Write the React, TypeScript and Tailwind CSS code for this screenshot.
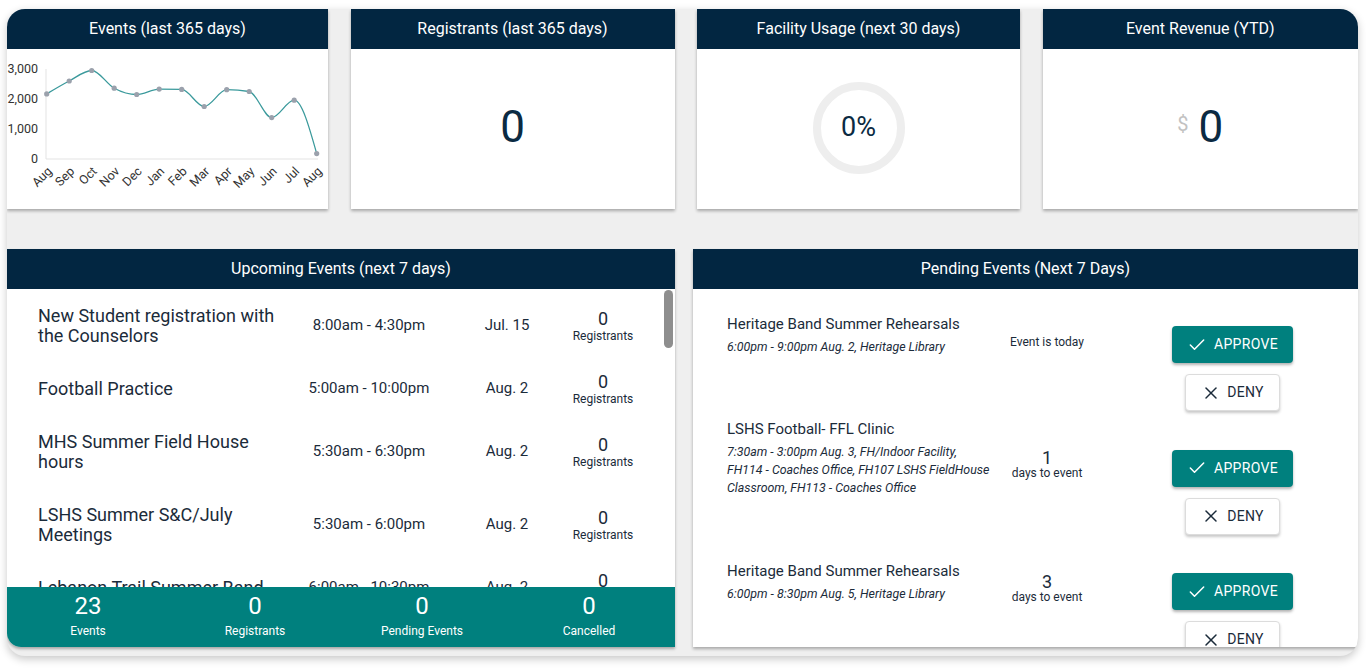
import { Check, X } from "lucide-react";

const navy = "bg-[#022641]";

const months = ["Aug", "Sep", "Oct", "Nov", "Dec", "Jan", "Feb", "Mar", "Apr", "May", "Jun", "Jul", "Aug"];
const values = [2170, 2600, 2950, 2360, 2150, 2330, 2320, 1750, 2310, 2250, 1380, 1960, 180];

const upcoming = [
  { name: "New Student registration with the Counselors", time: "8:00am - 4:30pm", date: "Jul. 15", regs: 0, tall: true },
  { name: "Football Practice", time: "5:00am - 10:00pm", date: "Aug. 2", regs: 0, tall: false },
  { name: "MHS Summer Field House hours", time: "5:30am - 6:30pm", date: "Aug. 2", regs: 0, tall: true },
  { name: "LSHS Summer S&C/July Meetings", time: "5:30am - 6:00pm", date: "Aug. 2", regs: 0, tall: true },
  { name: "Lebanon Trail Summer Band", time: "6:00am - 10:30pm", date: "Aug. 2", regs: 0, tall: false },
];

const pending = [
  { title: "Heritage Band Summer Rehearsals", sub: "6:00pm - 9:00pm Aug. 2, Heritage Library", days: null },
  {
    title: "LSHS Football- FFL Clinic",
    sub: "7:30am - 3:00pm Aug. 3, FH/Indoor Facility, FH114 - Coaches Office, FH107 LSHS FieldHouse Classroom, FH113 - Coaches Office",
    days: 1,
  },
  { title: "Heritage Band Summer Rehearsals", sub: "6:00pm - 8:30pm Aug. 5, Heritage Library", days: 3 },
];

const stats = [
  { n: 23, label: "Events" },
  { n: 0, label: "Registrants" },
  { n: 0, label: "Pending Events" },
  { n: 0, label: "Cancelled" },
];

// monotone-x curve, same idea as d3's curveMonotoneX
function monotonePath(pts: [number, number][]) {
  const n = pts.length;
  const t: number[] = new Array(n).fill(0);
  const sign = (v: number) => (v < 0 ? -1 : v > 0 ? 1 : 0);
  for (let i = 1; i < n - 1; i++) {
    const h0 = pts[i][0] - pts[i - 1][0];
    const h1 = pts[i + 1][0] - pts[i][0];
    const s0 = (pts[i][1] - pts[i - 1][1]) / h0;
    const s1 = (pts[i + 1][1] - pts[i][1]) / h1;
    const p = (s0 * h1 + s1 * h0) / (h0 + h1);
    t[i] = (sign(s0) + sign(s1)) * Math.min(Math.abs(s0), Math.abs(s1), 0.5 * Math.abs(p)) || 0;
  }
  const hA = pts[1][0] - pts[0][0];
  t[0] = (3 * (pts[1][1] - pts[0][1]) / hA - t[1]) / 2;
  const hB = pts[n - 1][0] - pts[n - 2][0];
  t[n - 1] = (3 * (pts[n - 1][1] - pts[n - 2][1]) / hB - t[n - 2]) / 2;
  let d = `M${pts[0][0]},${pts[0][1]}`;
  for (let i = 0; i < n - 1; i++) {
    const [x0, y0] = pts[i];
    const [x1, y1] = pts[i + 1];
    const dx = (x1 - x0) / 3;
    d += ` C${x0 + dx},${y0 + dx * t[i]} ${x1 - dx},${y1 - dx * t[i + 1]} ${x1},${y1}`;
  }
  return d;
}

function EventsChart() {
  const pts: [number, number][] = values.map((v, i) => [39.7 + 22.5 * i, 110 - v * 0.03]);
  return (
    <svg width="321" height="160" className="block">
      <line x1="39" y1="20" x2="39" y2="110" stroke="#e3e3e3" />
      <line x1="39" y1="110" x2="311" y2="110" stroke="#e3e3e3" />
      {["3,000", "2,000", "1,000", "0"].map((l, i) => (
        <text key={l} x="31" y={24 + i * 30} textAnchor="end" fontSize="12.5" fill="#333" fontFamily="Roboto, sans-serif">
          {l}
        </text>
      ))}
      <path d={monotonePath(pts)} fill="none" stroke="#3b9a9c" strokeWidth="1.3" />
      {pts.map(([x, y], i) => (
        <circle key={i} cx={x} cy={y} r="2.6" fill="#9ba1ac" />
      ))}
      {months.map((m, i) => {
        const x = 39.7 + 22.5 * i + 6;
        return (
          <text
            key={i}
            x={x}
            y="123"
            textAnchor="end"
            fontSize="12.5"
            fill="#333"
            fontFamily="Roboto, sans-serif"
            transform={`rotate(-45 ${x} 123)`}
          >
            {m}
          </text>
        );
      })}
    </svg>
  );
}

function CardHeader({ title }: { title: string }) {
  return (
    <div className={`${navy} h-[40px] shrink-0 flex items-center justify-center text-white text-[16px]`}>{title}</div>
  );
}

export default function App() {
  return (
    <div className="w-[1366px] h-[670px] bg-white pt-[9px] pl-[7px] overflow-hidden font-['Roboto',sans-serif]">
      <div className="w-[1351px] h-[647px] rounded-[18px] overflow-hidden bg-[#efefef] shadow-[0_3px_8px_rgba(0,0,0,0.22)]">
        {/* Top stat cards */}
        <div className="grid grid-cols-[321px_324px_323px_1fr] gap-x-[22.5px] h-[200px]">
          <div className="bg-white flex flex-col shadow-[0_2px_3px_rgba(0,0,0,0.3)]">
            <CardHeader title="Events (last 365 days)" />
            <EventsChart />
          </div>
          <div className="bg-white flex flex-col shadow-[0_2px_3px_rgba(0,0,0,0.3)]">
            <CardHeader title="Registrants (last 365 days)" />
            <div className="flex-1 flex items-center justify-center text-[44px] text-[#0b2a42] leading-none pb-[4px]">0</div>
          </div>
          <div className="bg-white flex flex-col shadow-[0_2px_3px_rgba(0,0,0,0.3)]">
            <CardHeader title="Facility Usage (next 30 days)" />
            <div className="flex-1 flex items-center justify-center pb-[3px]">
              <div className="w-[92px] h-[92px] rounded-full border-[8px] border-[#eeeeee] flex items-center justify-center text-[27px] text-[#0b2a42]">
                0%
              </div>
            </div>
          </div>
          <div className="bg-white flex flex-col shadow-[0_2px_3px_rgba(0,0,0,0.3)]">
            <CardHeader title="Event Revenue (YTD)" />
            <div className="flex-1 flex items-center justify-center gap-[10px] pb-[4px]">
              <span className="text-[20px] text-[#c2c2c2] -mt-[7px]">$</span>
              <span className="text-[44px] text-[#0b2a42] leading-none">0</span>
            </div>
          </div>
        </div>

        {/* Lower panels */}
        <div className="grid grid-cols-[668px_1fr] gap-x-[18px] h-[398px] mt-[40px]">
          {/* Upcoming events */}
          <div className="relative bg-white flex flex-col overflow-hidden rounded-bl-[14px] shadow-[0_2px_3px_rgba(0,0,0,0.3)]">
            <CardHeader title="Upcoming Events (next 7 days)" />
            <div className="flex-1 overflow-hidden">
              {upcoming.map((e, i) => (
                <div
                  key={i}
                  className={`grid grid-cols-[250px_162px_114px_78px] items-center pl-[31px] text-[#1b2b3a] ${e.tall ? "h-[73px]" : "h-[53px]"}`}
                >
                  <div className="text-[18px] leading-[20px] pr-[10px]">{e.name}</div>
                  <div className="text-[15px] text-center">{e.time}</div>
                  <div className="text-[15px] text-center">{e.date}</div>
                  <div className="flex flex-col items-center">
                    <span className="text-[18px] leading-[20px]">{e.regs}</span>
                    <span className="text-[12px] leading-[14px]">Registrants</span>
                  </div>
                </div>
              ))}
            </div>
            <div className="h-[60px] shrink-0 bg-[#00807e] grid grid-cols-4 text-white pt-[6px]">
              {stats.map((s) => (
                <div key={s.label} className="flex flex-col items-center -ml-[5px]">
                  <span className="text-[24px] leading-[26px]">{s.n}</span>
                  <span className="text-[12px] leading-[16px] mt-[4px]">{s.label}</span>
                </div>
              ))}
            </div>
            <div className="absolute right-[2px] top-[41px] w-[9px] h-[58px] rounded-full bg-[#8e8e8e]" />
          </div>

          {/* Pending events */}
          <div className="bg-white flex flex-col overflow-hidden shadow-[0_2px_3px_rgba(0,0,0,0.3)]">
            <CardHeader title="Pending Events (Next 7 Days)" />
            <div className="pt-[37px] pl-[34px]">
              {pending.map((p, i) => (
                <div key={i} className="flex items-start h-[123.5px]">
                  <div className="w-[270px] h-[17px] flex items-center">
                    <div className="text-[#1b2b3a]">
                      <div className="text-[15px] leading-[20px]">{p.title}</div>
                      <div className="text-[12.4px] leading-[18px] italic mt-[4px] w-[266px]">{p.sub}</div>
                    </div>
                  </div>
                  <div className="w-[100px] h-[31px] flex items-center justify-center text-[#1b2b3a] text-center">
                    {p.days === null ? (
                      <span className="text-[12px] leading-[16px]">Event is today</span>
                    ) : (
                      <div className="flex flex-col items-center">
                        <span className="text-[18px] leading-[16px]">{p.days}</span>
                        <span className="text-[12px] leading-[14px]">days to event</span>
                      </div>
                    )}
                  </div>
                  <div className="ml-[75px] w-[121px] flex flex-col items-center">
                    <button className="w-[121px] h-[37px] rounded-[4px] bg-[#00807e] text-white flex items-center justify-center gap-[7px] text-[14px] tracking-[0.3px] shadow-[0_2px_3px_rgba(0,0,0,0.3)]">
                      <Check size={20} strokeWidth={1.8} />
                      APPROVE
                    </button>
                    <button className="w-[95px] h-[37px] mt-[11px] rounded-[4px] bg-white border border-[#dcdcdc] text-[#1b2b3a] flex items-center justify-center gap-[6px] text-[14px] tracking-[0.3px] shadow-[0_2px_3px_rgba(0,0,0,0.22)]">
                      <X size={20} strokeWidth={1.8} />
                      DENY
                    </button>
                  </div>
                </div>
              ))}
            </div>
          </div>
        </div>
      </div>
    </div>
  );
}
